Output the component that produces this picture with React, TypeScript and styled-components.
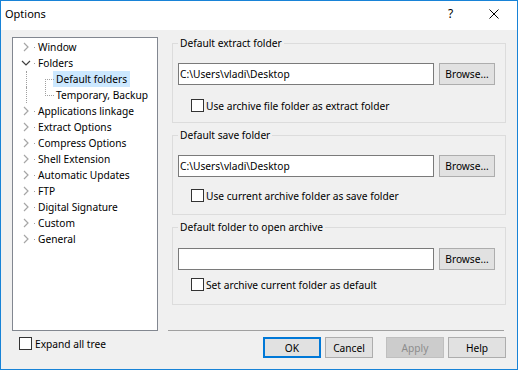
import React from 'react'
import styled, { createGlobalStyle } from 'styled-components'

const GlobalStyle = createGlobalStyle`
  html, body {
    margin: 0;
    padding: 0;
    background: #fff;
  }
  body {
    font-family: "Noto Sans", "Segoe UI", sans-serif;
    font-size: 10.2px;
    color: #000;
  }
  * {
    box-sizing: border-box;
  }
`

const Window = styled.div`
  width: 518px;
  height: 370px;
  border: 1px solid #1883d7;
  background: #f0f0f0;
  display: flex;
  flex-direction: column;
`

const TitleBar = styled.div`
  height: 29px;
  flex: none;
  display: flex;
  align-items: center;
  padding-bottom: 4px;
  background: #fff;
`

const Title = styled.div`
  flex: 1;
  padding-left: 4px;
  font-size: 11px;
`

const CaptionButton = styled.div<{ $shift?: number }>`
  width: 46px;
  height: 25px;
  display: flex;
  align-items: center;
  justify-content: center;
  padding-left: ${(p) => p.$shift || 0}px;
  font-size: 12px;
`

const Body = styled.div`
  flex: 1;
  display: grid;
  grid-template-columns: 146px 338px;
  grid-template-rows: 294px auto;
  column-gap: 10px;
  padding: 7px 11px 0;
`

// tree on the left
const Tree = styled.div`
  border: 1px solid #828790;
  background: #fff;
  padding-top: 1px;
`

const TreeRow = styled.div`
  height: 16px;
  display: flex;
  align-items: center;
  padding-left: 7px;
`

const Expander = styled.svg`
  width: 12px;
  height: 16px;
  flex: none;
`

const Tick = styled.span`
  width: 3px;
  height: 1px;
  flex: none;
  background: linear-gradient(to right, transparent 2px, #a0a0a0 2px, #a0a0a0 3px, transparent 3px);
`

const Guide = styled.span<{ $last?: boolean }>`
  width: 33px;
  height: 16px;
  flex: none;
  position: relative;
  &::before {
    content: '';
    position: absolute;
    left: 6px;
    top: 0;
    height: 16px;
    border-left: 1px dotted #a0a0a0;
  }
  &::after {
    content: '';
    position: absolute;
    left: 25px;
    width: 8px;
    height: 8px;
    border-left: 1px dotted #a0a0a0;
    ${(p) => (p.$last ? 'top: 0; border-bottom: 1px dotted #a0a0a0;' : 'top: 8px; border-top: 1px dotted #a0a0a0;')}
  }
`

const Label = styled.span<{ $selected?: boolean }>`
  height: 16px;
  line-height: 16px;
  padding: 0 3px;
  white-space: nowrap;
  background: ${(p) => (p.$selected ? '#cce8ff' : 'transparent')};
`

// right side
const RightPane = styled.div`
  display: flex;
  flex-direction: column;
`

const Group = styled.fieldset<{ $bottom: number }>`
  margin: 0 0 0 4px;
  border: 1px solid #dcdcdc;
  padding: 0 10px ${(p) => p.$bottom}px 5px;
  min-width: 0;
  & + & {
    margin-top: 6px;
  }
`

const Legend = styled.legend`
  padding: 0 2px;
  line-height: 13px;
`

const FieldRow = styled.div<{ $top: number }>`
  display: flex;
  gap: 5px;
  margin-top: ${(p) => p.$top}px;
`

const PathBox = styled.div`
  flex: 1;
  height: 22px;
  border: 1px solid #7a7a7a;
  background: #fff;
  padding-left: 1px;
  line-height: 20px;
  white-space: nowrap;
`

const PushButton = styled.div<{ $width: number; $height?: number; $default?: boolean; $disabled?: boolean; $gap?: number }>`
  width: ${(p) => p.$width}px;
  height: ${(p) => p.$height || 22}px;
  margin-left: ${(p) => p.$gap || 0}px;
  flex: none;
  display: flex;
  align-items: center;
  justify-content: center;
  border: ${(p) => (p.$default ? '2px solid #0078d7' : p.$disabled ? '1px solid #bfbfbf' : '1px solid #adadad')};
  background: ${(p) => (p.$disabled ? '#cccccc' : '#e1e1e1')};
  color: ${(p) => (p.$disabled ? '#8c8c8c' : '#000')};
`

const CheckRow = styled.label<{ $indent: number; $top: number }>`
  display: flex;
  align-items: center;
  gap: 2px;
  height: 13px;
  margin-top: ${(p) => p.$top}px;
  padding-left: ${(p) => p.$indent}px;
  white-space: nowrap;
`

const Box = styled.span`
  width: 13px;
  height: 13px;
  flex: none;
  border: 1px solid #333;
  background: #fff;
`

const Separator = styled.div`
  margin-top: auto;
  margin-right: 2px;
  height: 1px;
  background: #a0a0a0;
`

const ButtonBar = styled.div`
  display: flex;
  justify-content: flex-end;
  gap: 4px;
  padding-top: 6px;
`

type Node = { label: string; kind: 'closed' | 'open' | 'child'; selected?: boolean; last?: boolean }

const nodes: Node[] = [
  { label: 'Window', kind: 'closed' },
  { label: 'Folders', kind: 'open' },
  { label: 'Default folders', kind: 'child', selected: true },
  { label: 'Temporary, Backup', kind: 'child', last: true },
  { label: 'Applications linkage', kind: 'closed' },
  { label: 'Extract Options', kind: 'closed' },
  { label: 'Compress Options', kind: 'closed' },
  { label: 'Shell Extension', kind: 'closed' },
  { label: 'Automatic Updates', kind: 'closed' },
  { label: 'FTP', kind: 'closed' },
  { label: 'Digital Signature', kind: 'closed' },
  { label: 'Custom', kind: 'closed' },
  { label: 'General', kind: 'closed' }
]

const groups = [
  { title: 'Default extract folder', path: 'C:\\Users\\vladi\\Desktop', check: 'Use archive file folder as extract folder', rowTop: 13, checkTop: 14, bottom: 10 },
  { title: 'Default save folder', path: 'C:\\Users\\vladi\\Desktop', check: 'Use current archive folder as save folder', rowTop: 13, checkTop: 12, bottom: 12 },
  { title: 'Default folder to open archive', path: '', check: 'Set archive current folder as default', rowTop: 14, checkTop: 8, bottom: 13 }
]

function TreeItem ({ node }: { node: Node }) {
  if (node.kind === 'child') {
    return (
      <TreeRow>
        <Guide $last={node.last} />
        <Label $selected={node.selected}>{node.label}</Label>
      </TreeRow>
    )
  }
  return (
    <TreeRow>
      <Expander viewBox="0 0 12 16">
        {node.kind === 'open'
          ? <polyline points="2,6 6,10 10,6" fill="none" stroke="#404040" strokeWidth="1.2" />
          : <polyline points="4,4 8,8 4,12" fill="none" stroke="#a6a6a6" strokeWidth="1.2" />}
      </Expander>
      <Tick />
      <Label>{node.label}</Label>
    </TreeRow>
  )
}

export default function App () {
  return (
    <>
      <GlobalStyle />
      <Window>
        <TitleBar>
          <Title>Options</Title>
          <CaptionButton $shift={5}>?</CaptionButton>
          <CaptionButton>
            <svg width="10" height="10" viewBox="0 0 10 10">
              <path d="M0.5 0.5 L9.5 9.5 M9.5 0.5 L0.5 9.5" stroke="#000" strokeWidth="1" />
            </svg>
          </CaptionButton>
        </TitleBar>
        <Body>
          <Tree>
            {nodes.map((n) => <TreeItem key={n.label} node={n} />)}
          </Tree>
          <RightPane>
            {groups.map((g) => (
              <Group key={g.title} $bottom={g.bottom}>
                <Legend>{g.title}</Legend>
                <FieldRow $top={g.rowTop}>
                  <PathBox>{g.path}</PathBox>
                  <PushButton $width={56}>Browse...</PushButton>
                </FieldRow>
                <CheckRow $indent={13} $top={g.checkTop}>
                  <Box />
                  {g.check}
                </CheckRow>
              </Group>
            ))}
            <Separator />
          </RightPane>
          <CheckRow $indent={7} $top={6}>
            <Box />
            <span style={{ paddingLeft: 1 }}>Expand all tree</span>
          </CheckRow>
          <ButtonBar>
            <PushButton $width={58} $height={21} $default>OK</PushButton>
            <PushButton $width={48} $height={21}>Cancel</PushButton>
            <PushButton $width={58} $height={21} $disabled $gap={9}>Apply</PushButton>
            <PushButton $width={58} $height={21}>Help</PushButton>
          </ButtonBar>
        </Body>
      </Window>
    </>
  )
}
